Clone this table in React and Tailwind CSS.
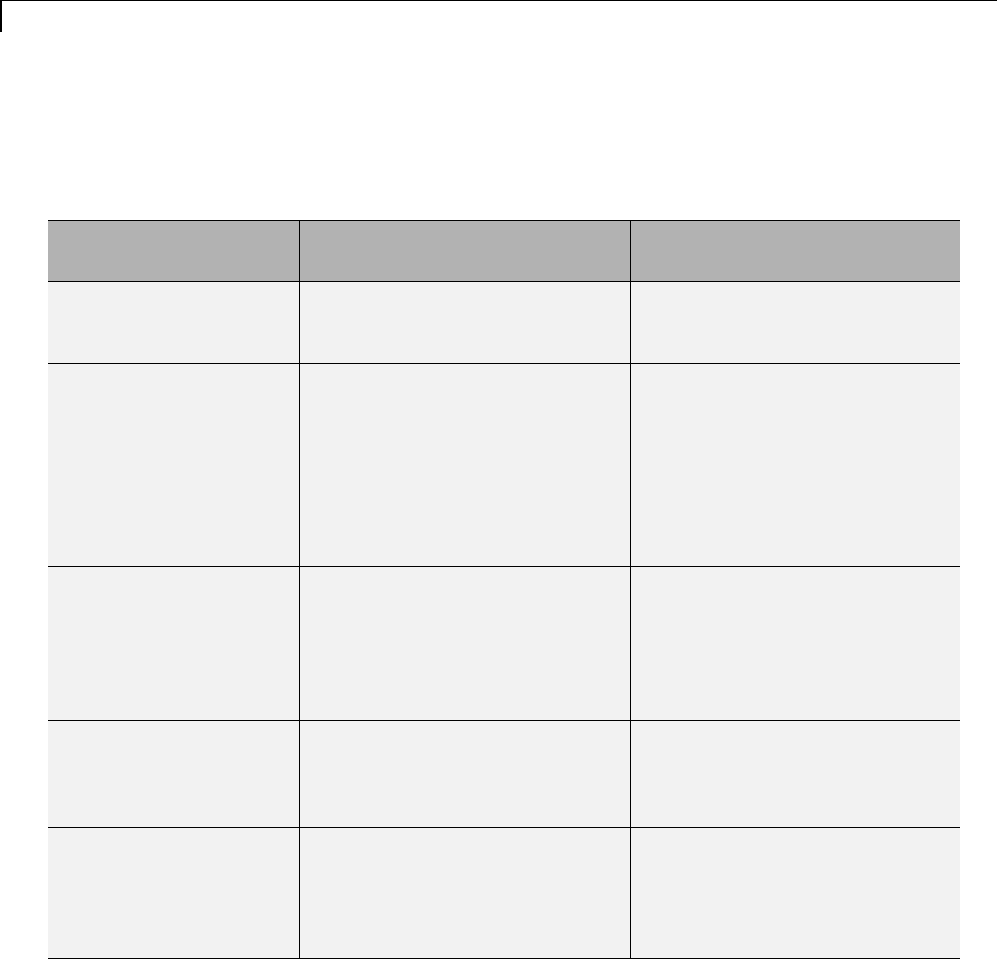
export default function App() {
  const rows = [
    { h: 'h-[82px]' },
    { h: 'h-[203px]' },
    { h: 'h-[154px]' },
    { h: 'h-[107px]' },
    { h: 'h-[131px]' },
  ];

  return (
    <div className="w-[997px] h-[959px] bg-white overflow-hidden font-['Liberation_Sans',sans-serif]">
      {/* page rule */}
      <div className="h-[220px] border-t border-black">
        <div className="w-[2px] h-[31px] bg-black" />
      </div>

      {/* table */}
      <div className="ml-[48px] w-[912px]">
        <div className="flex h-[62px] border-t border-b border-black bg-[#b2b2b2]">
          <div className="w-[251px]" />
          <div className="w-[331px] border-l border-black" />
          <div className="w-[330px] border-l border-black" />
        </div>
        {rows.map((r, i) => (
          <div key={i} className={`flex ${r.h} border-b border-black bg-[#f2f2f2]`}>
            <div className="w-[251px]" />
            <div className="w-[331px] border-l border-black" />
            <div className="w-[330px] border-l border-black" />
          </div>
        ))}
      </div>
    </div>
  );
}
